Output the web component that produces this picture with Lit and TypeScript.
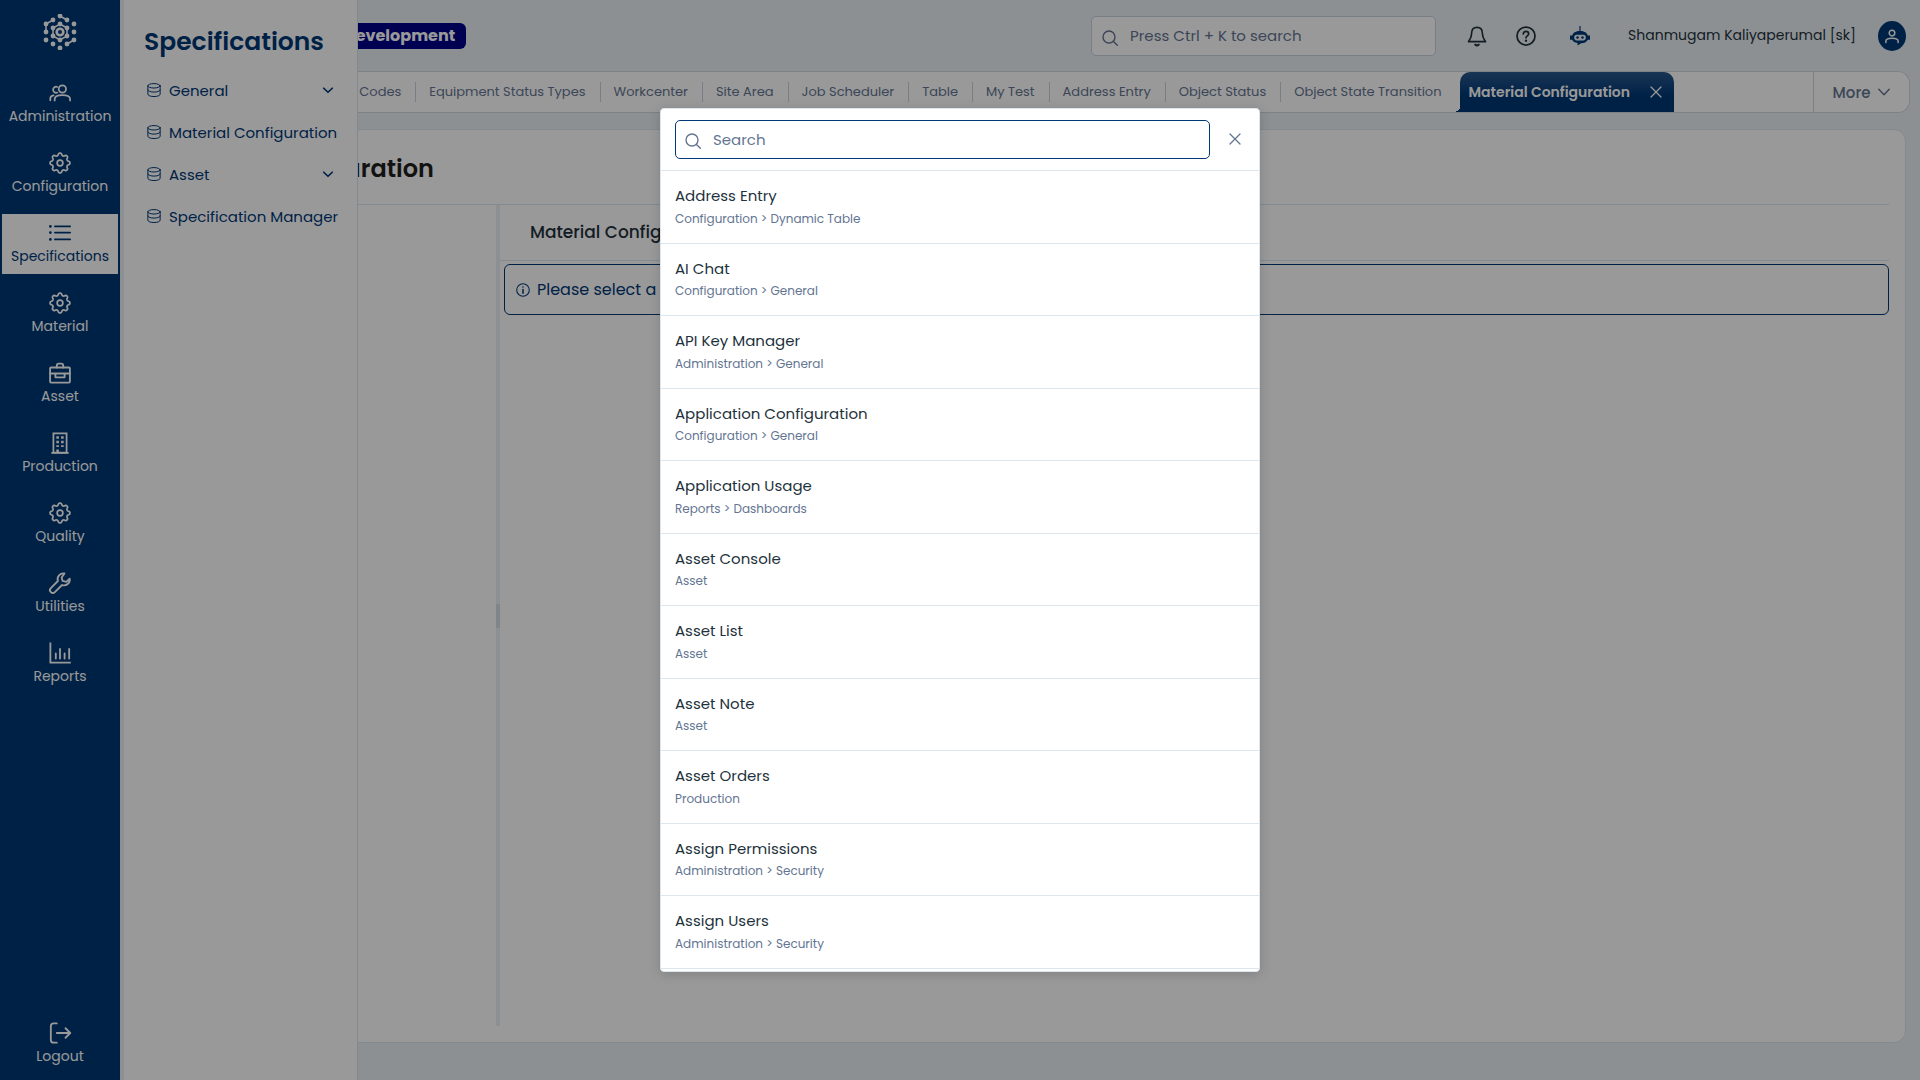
import { LitElement, html, css, svg, nothing } from "lit";
import { customElement, property } from "lit/decorators.js";
import { classMap } from "lit/directives/class-map.js";

/** Outline of an eight-toothed gear centred in a 24 unit box. */
function gearPath(): string {
  const points: string[] = [];
  for (let i = 0; i < 96; i++) {
    const angle = (i / 96) * Math.PI * 2 - Math.PI / 2;
    const wave = Math.cos((i / 96) * Math.PI * 16);
    const tooth = Math.sign(wave) * Math.pow(Math.abs(wave), 0.5);
    const radius = 9.6 + 1.2 * tooth;
    points.push(
      `${(12 + radius * Math.cos(angle)).toFixed(2)} ${(12 + radius * Math.sin(angle)).toFixed(2)}`
    );
  }
  return `M${points.join("L")}Z`;
}

const stroke = (width: number, body: unknown) => svg`
  <g fill="none" stroke="currentColor" stroke-width=${width} stroke-linecap="round" stroke-linejoin="round">${body}</g>`;

const gear = stroke(1.9, svg`<path d=${gearPath()}></path><circle cx="12" cy="12" r="3.1"></circle>`);

const ICONS: Record<string, unknown> = {
  people: stroke(1.9, svg`
    <circle cx="14.6" cy="7.6" r="4"></circle>
    <path d="M6.2 20.2v-1.4c0-3 2.6-4.4 8.4-4.4s8.4 1.4 8.4 4.4v1.4"></path>
    <path d="M9 5.4a3.3 3.3 0 1 0 0 6.1M1.4 20v-1.6c0-2 1-3.3 3.6-3.7"></path>`),
  gear,
  list: stroke(2, svg`
    <path d="M6.5 4.8H23M6.5 11.5H23M6.5 19H23"></path>
    <path stroke-width="3" d="M1.5 4.8h.01M1.5 11.5h.01M1.5 19h.01"></path>`),
  briefcase: stroke(2, svg`
    <rect x="1.2" y="6" width="21.6" height="16.5" rx="1"></rect>
    <path d="M8.5 6V4Q8.5 1.8 10.5 1.8H13.5Q15.5 1.8 15.5 4V6M1.2 12.5H22.8M7 13v3.7H17V13"></path>`),
  building: svg`
    <g fill="none" stroke="currentColor" stroke-width="1.9"><rect x="4.8" y="1.5" width="14.4" height="21"></rect><path d="M2.5 22.8H21.5"></path></g>
    <path fill="currentColor" d="M8 4.5h2.8v2.8H8zM13.2 4.5H16v2.8h-2.8zM8 9.5h2.8v2.8H8zM13.2 9.5H16v2.8h-2.8zM8 14.5h2.8v1.8H8zM13.2 14.5H16v1.8h-2.8zM8 19h2.8v3.5H8z"></path>`,
  wrench: stroke(2, svg`
    <path d="M16.9 1.6a6.3 6.3 0 0 0-7.2 8.2L2 17.5a3 3 0 0 0 4.4 4.4l7.8-7.7a6.3 6.3 0 0 0 8.4-7l-3.8 3.5-4-1-1-3.6z"></path>`),
  chart: stroke(2, svg`<path stroke-linecap="square" d="M1.5 1.5V22.5H22.8"></path><path d="M7.4 12.5V18M12 7.5V18M17 12.5V18M22 7.5V18"></path>`),
  logout: stroke(2, svg`<path d="M8.5 1.5H5Q2 1.5 2 4.500V19.5Q2 22.5 5 22.5H8.5M8.5 12H23M18 6.8L23.2 12L18 17.2"></path>`),
  database: stroke(1.7, svg`
    <ellipse cx="12" cy="4.800" rx="10.500" ry="3.800"></ellipse>
    <path d="M1.500 4.800V19.200C1.500 24.500 22.500 24.500 22.500 19.200V4.800M1.500 12C1.500 17 22.500 17 22.500 12"></path>`),
  chevron: stroke(3.4, svg`<path d="M3.5 8.5L12 16.5L20.5 8.5"></path>`),
  chevronThin: stroke(2.8, svg`<path d="M1.5 6.5L12 17.5L22.5 6.5"></path>`),
  close: stroke(2.6, svg`<path d="M2 2L22 22M22 2L2 22"></path>`),
  search: stroke(2.1, svg`<circle cx="10.5" cy="10.5" r="9"></circle><path d="M17.2 17.2L23 23"></path>`),
  bell: stroke(2, svg`
    <path d="M12 1.7C7.5 1.7 5.5 5 5.5 9C5.5 14.5 3.2 16.5 1.8 18.8H22.2C20.8 16.5 18.5 14.5 18.5 9C18.5 5 16.5 1.7 12 1.7Z"></path>
    <path stroke-width="2.6" d="M10 22.5Q12 24 14 22.5"></path>`),
  help: stroke(2.1, svg`
    <circle cx="12" cy="12" r="10.8"></circle>
    <path d="M8.8 9.5C8.8 5.2 15.2 5.4 15.2 9.3C15.2 11.8 12 11.8 12 14.2"></path>
    <path stroke-width="2.8" d="M12 17.6h.01"></path>`),
  robot: svg`
    <path fill="currentColor" d="M11.3 0h1.4v7h-1.4z"></path>
    <path fill="currentColor" fill-rule="evenodd" d="M12 6C17 6 20.500 8 21.300 11.500H24V16.500H21.300C20 19.500 16.800 20.600 13.500 20.800L9 23.500V20.500C5.500 20 3.500 18.500 2.700 16.500H0V11.500H2.700C3.500 8 7 6 12 6ZM8 10.500Q5 10.500 5 13.900T8 17.300H16Q19 17.300 19 13.900T16 10.500Z"></path>
    <circle fill="currentColor" cx="9" cy="13.9" r="1.5"></circle><circle fill="currentColor" cx="15" cy="13.9" r="1.5"></circle>`,
  user: stroke(2.6, svg`<circle cx="12" cy="7" r="4.8"></circle><path d="M1.5 23V21C1.5 17 5 16 12 16S22.5 17 22.5 21V23"></path>`),
  info: stroke(1.8, svg`<circle cx="12" cy="12" r="10.8"></circle><path stroke-width="2.6" d="M12 11V17.5M12 7h.01"></path>`),
};

const DOTS = [
  [18, 2], [25, 6], [11, 6], [4, 10], [32, 10], [4, 18], [32, 18], [4, 26], [32, 26],
  [11, 30], [25, 30], [18, 34], [18, 10], [11, 14], [25, 14], [11, 22], [25, 22], [18, 26],
];

@customElement("app-icon")
export class AppIcon extends LitElement {
  @property() name = "";

  static styles = css`
    :host { display: block; flex: none; width: 22px; height: 22px; }
    svg { display: block; width: 100%; height: 100%; overflow: visible; }
  `;

  render() {
    return html`<svg viewBox="0 0 24 24" aria-hidden="true">${ICONS[this.name] ?? nothing}</svg>`;
  }
}

const SECTIONS = [
  ["people", "Administration"],
  ["gear", "Configuration"],
  ["list", "Specifications"],
  ["gear", "Material"],
  ["briefcase", "Asset"],
  ["building", "Production"],
  ["gear", "Quality"],
  ["wrench", "Utilities"],
  ["chart", "Reports"],
];

const SUBMENU: [string, boolean][] = [
  ["General", true],
  ["Material Configuration", false],
  ["Asset", true],
  ["Specification Manager", false],
];

const TABS = [
  "Codes",
  "Equipment Status Types",
  "Workcenter",
  "Site Area",
  "Job Scheduler",
  "Table",
  "My Test",
  "Address Entry",
  "Object Status",
  "Object State Transition",
];

const RESULTS = [
  ["Address Entry", "Configuration > Dynamic Table"],
  ["AI Chat", "Configuration > General"],
  ["API Key Manager", "Administration > General"],
  ["Application Configuration", "Configuration > General"],
  ["Application Usage", "Reports > Dashboards"],
  ["Asset Console", "Asset"],
  ["Asset List", "Asset"],
  ["Asset Note", "Asset"],
  ["Asset Orders", "Production"],
  ["Assign Permissions", "Administration > Security"],
  ["Assign Users", "Administration > Security"],
];

@customElement("app-root")
export class AppRoot extends LitElement {
  static styles = css`
    :host {
      --brand: #003876;
      --page: #eaf1f6;
      --line: #dbe6ee;
      --ink: #1e323c;
      --muted: #647592;
      display: flex;
      position: relative;
      height: 100vh;
      overflow: hidden;
      background: var(--page);
      color: var(--ink);
      font-family: Poppins, Inter, "Open Sans", sans-serif;
      font-size: 15px;
    }
    * { box-sizing: border-box; }
    button, input { font: inherit; color: inherit; }
    button { border: 0; padding: 0; background: none; cursor: pointer; }
    a { color: inherit; text-decoration: none; }
    ul { list-style: none; margin: 0; padding: 0; }
    h1, h2, h3 { margin: 0; }

    .rail {
      flex: none;
      width: 120px;
      display: flex;
      flex-direction: column;
      padding: 14px 2px 6px;
      background: var(--brand);
      color: #fff;
    }
    .logo { align-self: center; width: 36px; height: 36px; margin-bottom: 24px; }
    .sections { display: flex; flex-direction: column; gap: 10px; }
    .section {
      display: flex;
      flex-direction: column;
      align-items: center;
      gap: 1px;
      height: 60px;
      padding-top: 8px;
      font-size: 14px;
      line-height: 22px;
    }
    .section.current { background: #fff; color: var(--brand); }
    .logout { margin-top: auto; }

    .flyout {
      position: absolute;
      left: 120px;
      top: 0;
      bottom: 0;
      width: 238px;
      padding: 22px 20px;
      background: #fff;
      color: var(--brand);
      border-left: 4px solid var(--page);
      border-right: 1px solid var(--line);
    }
    .flyout h2 { font-size: 25px; line-height: 40px; font-weight: 600; padding-bottom: 7px; }
    .entry {
      display: flex;
      align-items: center;
      gap: 8px;
      width: 100%;
      height: 42px;
      padding: 0 0 0 3px;
      white-space: nowrap;
    }
    .entry app-icon { width: 14px; height: 14px; }
    .entry .caret { width: 12px; height: 12px; margin: 0 3px 0 auto; }

    .page { flex: 1; min-width: 0; display: flex; flex-direction: column; }
    .top {
      flex: none;
      height: 71px;
      display: flex;
      align-items: center;
      padding: 0 14px 0 213px;
    }
    .badge {
      padding: 0 11px;
      border-radius: 6px;
      background: #00008b;
      color: #fff;
      font-size: 16px;
      line-height: 26px;
      font-weight: 700;
    }
    .quick { margin-left: auto; width: 345px; }
    .field {
      display: flex;
      align-items: center;
      gap: 12px;
      height: 40px;
      padding: 0 10px;
      border: 1px solid #c9d3df;
      border-radius: 5px;
      background: #fff;
      color: var(--muted);
    }
    .field app-icon { width: 16px; height: 16px; margin-top: 4px; }
    .field input {
      flex: 1;
      min-width: 0;
      border: 0;
      outline: 0;
      padding: 0;
      background: none;
    }
    .field input::placeholder { color: var(--muted); opacity: 1; }
    .tools { display: flex; align-items: center; gap: 29px; margin-left: 31px; }
    .tools button { display: block; }
    .tools .small { width: 20px; height: 20px; }
    .tools .bot { margin-left: 5px; color: var(--brand); }
    .user { display: flex; align-items: center; gap: 22px; margin-left: 38px; font-size: 14px; }
    .avatar {
      display: grid;
      place-items: center;
      width: 28px;
      height: 30px;
      border-radius: 50%;
      background: var(--brand);
      color: #fff;
    }
    .avatar app-icon { width: 14px; height: 14px; }

    .tabs {
      flex: none;
      display: flex;
      height: 42px;
      margin-right: 10px;
      border: 1px solid #d0d7e0;
      border-left: 0;
      border-radius: 0 12px 12px 0;
      background: #fff;
      color: var(--muted);
      overflow: hidden;
    }
    .strip {
      flex: 1;
      min-width: 0;
      display: flex;
      justify-content: flex-end;
      align-items: center;
      padding-right: 139px;
      font-size: 13px;
    }
    .tab {
      flex: none;
      height: 20px;
      padding: 0 14px 0 13px;
      border-right: 1px solid #c9d3df;
      line-height: 20px;
      white-space: nowrap;
    }
    .tab:nth-last-child(2) { border-right: 0; padding-right: 18px; }
    .active {
      position: relative;
      flex: none;
      display: flex;
      align-items: center;
      gap: 20px;
      height: 40px;
      padding: 0 12px 0 9px;
      border-radius: 10px 10px 0 0;
      background: linear-gradient(#2a588c, var(--brand) 60%);
      color: #fff;
      font-size: 14px;
      font-weight: 600;
      white-space: nowrap;
    }
    .active::before {
      content: "";
      position: absolute;
      left: -4px;
      bottom: 0;
      width: 4px;
      height: 5px;
      background: radial-gradient(circle at 0 0, transparent 4px, var(--brand) 4px);
    }
    .active app-icon { width: 12px; height: 12px; }
    .more {
      flex: none;
      width: 96px;
      display: flex;
      align-items: center;
      justify-content: center;
      gap: 8px;
      border-left: 1px solid #d0d7e0;
      font-size: 15px;
      font-weight: 500;
    }
    .more app-icon { width: 12px; height: 12px; }

    .card {
      flex: 1;
      min-height: 0;
      display: flex;
      flex-direction: column;
      margin: 16px 14px 37px 4px;
      padding: 0 16px 16px;
      border: 1px solid var(--line);
      border-radius: 12px;
      background: #fff;
    }
    .card h1 {
      flex: none;
      padding: 21px 16px 17px;
      border-bottom: 1px solid var(--line);
      color: #1e1e1e;
      font-size: 24px;
      line-height: 36px;
      font-weight: 600;
    }
    .split { flex: 1; min-height: 0; display: flex; }
    .tree { flex: none; width: 355px; }
    .gutter {
      flex: none;
      width: 4px;
      display: flex;
      align-items: center;
      background: var(--page);
    }
    .grip { flex: 1; height: 24px; background: #d3dfea; }
    .detail { flex: 1; min-width: 0; }
    .detail h3 {
      padding: 0 30px;
      border-bottom: 1px solid var(--line);
      font-size: 17px;
      line-height: 55px;
      font-weight: 500;
    }
    .notice {
      display: flex;
      align-items: center;
      gap: 7px;
      height: 51px;
      margin: 3px 0 0 4px;
      padding: 0 11px;
      border: 1px solid var(--brand);
      border-radius: 6px;
      color: var(--brand);
      font-size: 16px;
    }
    .notice app-icon { width: 14px; height: 14px; }

    .overlay {
      position: absolute;
      inset: 0;
      display: flex;
      align-items: center;
      justify-content: center;
      background: rgba(0, 0, 0, 0.4);
    }
    .dialog {
      display: flex;
      flex-direction: column;
      width: 600px;
      max-width: 90vw;
      height: 80vh;
      overflow: hidden;
      border: 1px solid var(--line);
      border-radius: 4px;
      background: #fff;
      box-shadow: 0 2px 12px rgba(0, 0, 0, 0.16);
    }
    .finder {
      flex: none;
      display: flex;
      align-items: center;
      gap: 18px;
      padding: 11px 17px 11px 14px;
      border-bottom: 1px solid var(--line);
    }
    .finder .field { flex: 1; height: 39px; padding: 0 9px 1px; border-color: var(--brand); }
    .finder button { color: var(--muted); padding: 0 1px 2px; }
    .finder button app-icon { width: 12px; height: 12px; }
    .results { flex: 1; min-height: 0; overflow: hidden; }
    .result {
      display: flex;
      flex-direction: column;
      gap: 2px;
      padding: 14px 14px 15px;
      border-bottom: 1px solid var(--line);
      line-height: 1.5;
    }
    .path { font-size: 12px; color: var(--muted); }
  `;

  private renderRail() {
    return html`
      <nav class="rail" aria-label="Main">
        <svg class="logo" viewBox="0 0 36 36" fill="#fff" stroke="#fff">
          <path fill="none" stroke-width="1.5"
            d="M18 2L25 6M11 6L4 10V18M32 26L25 30M18 10L25 14V22L18 26L11 22V14Z"></path>
          ${DOTS.map(([x, y]) => svg`<circle stroke="none" cx=${x} cy=${y} r="2.4"></circle>`)}
          <circle fill="none" stroke-width="2.6" cx="18" cy="18" r="3.3"></circle>
        </svg>
        <div class="sections">
          ${SECTIONS.map(
            ([icon, label]) => html`
              <a class=${classMap({ section: true, current: label === "Specifications" })} href="#">
                <app-icon name=${icon}></app-icon><span>${label}</span>
              </a>`
          )}
        </div>
        <button class="section logout"><app-icon name="logout"></app-icon><span>Logout</span></button>
      </nav>`;
  }

  private renderTop() {
    return html`
      <header class="top">
        <span class="badge">Development</span>
        <label class="field quick">
          <app-icon name="search"></app-icon>
          <input type="text" aria-label="Quick search" placeholder="Press Ctrl + K to search" />
        </label>
        <div class="tools">
          <button aria-label="Notifications"><app-icon class="small" name="bell"></app-icon></button>
          <button aria-label="Help"><app-icon class="small" name="help"></app-icon></button>
          <button class="bot" aria-label="Assistant"><app-icon class="small" name="robot"></app-icon></button>
        </div>
        <div class="user">
          <span>Shanmugam Kaliyaperumal [sk]</span>
          <button class="avatar" aria-label="Account"><app-icon name="user"></app-icon></button>
        </div>
      </header>`;
  }

  private renderTabs() {
    return html`
      <div class="tabs">
        <div class="strip">
          ${TABS.map((label) => html`<button class="tab">${label}</button>`)}
          <div class="active">
            <span>Material Configuration</span>
            <button aria-label="Close tab"><app-icon name="close"></app-icon></button>
          </div>
        </div>
        <button class="more">More <app-icon name="chevronThin"></app-icon></button>
      </div>`;
  }

  private renderFlyout() {
    return html`
      <aside class="flyout">
        <h2>Specifications</h2>
        ${SUBMENU.map(
          ([label, expandable]) => html`
            <button class="entry">
              <app-icon name="database"></app-icon><span>${label}</span>
              ${expandable ? html`<app-icon class="caret" name="chevron"></app-icon>` : nothing}
            </button>`
        )}
      </aside>`;
  }

  private renderDialog() {
    return html`
      <div class="overlay">
        <div class="dialog" role="dialog" aria-label="Search pages">
          <div class="finder">
            <label class="field">
              <app-icon name="search"></app-icon>
              <input type="text" aria-label="Search" placeholder="Search" />
            </label>
            <button aria-label="Close"><app-icon name="close"></app-icon></button>
          </div>
          <ul class="results">
            ${RESULTS.map(
              ([title, path]) => html`
                <li><a class="result" href="#"><span>${title}</span><span class="path">${path}</span></a></li>`
            )}
          </ul>
        </div>
      </div>`;
  }

  render() {
    return html`
      ${this.renderRail()}
      <div class="page">
        ${this.renderTop()} ${this.renderTabs()}
        <main class="card">
          <h1>Material Configuration</h1>
          <div class="split">
            <div class="tree"></div>
            <div class="gutter"><span class="grip"></span></div>
            <section class="detail">
              <h3>Material Configuration</h3>
              <p class="notice"><app-icon name="info"></app-icon>Please select a material</p>
            </section>
          </div>
        </main>
      </div>
      ${this.renderFlyout()} ${this.renderDialog()}
    `;
  }
}
